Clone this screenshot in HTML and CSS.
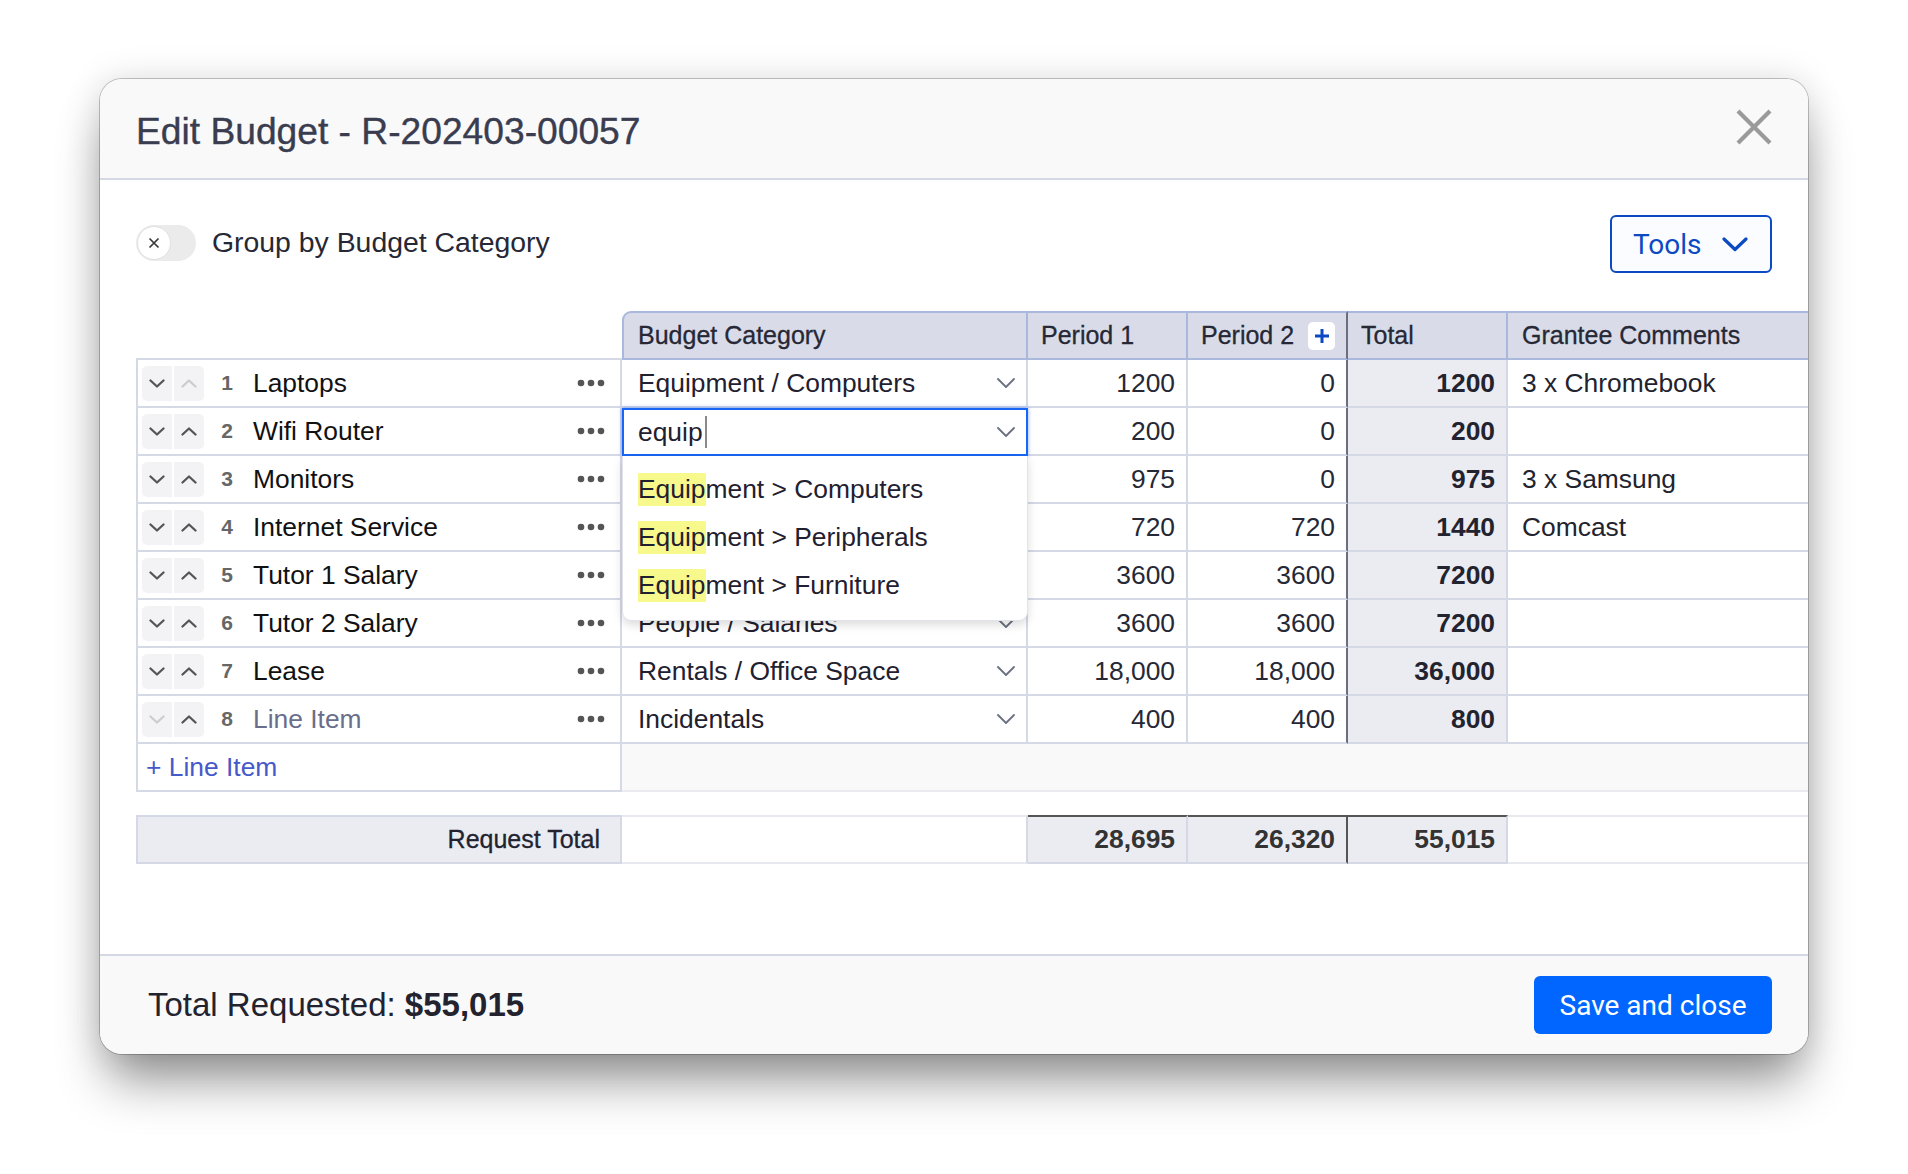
FILE: index.html
```html
<!DOCTYPE html>
<html lang="en">
<head>
<meta charset="utf-8">
<title>Edit Budget</title>
<link rel="stylesheet" href="styles.css">
</head>
<body>
<div class="page">
  <div class="modal">
    <div class="mhead">
      <h1 class="title">Edit Budget - R-202403-00057</h1>
      <svg class="close" width="36" height="36" viewBox="0 0 36 36"><path d="M2 2 L34 34 M34 2 L2 34" stroke="#9a9a9a" stroke-width="4.2" fill="none"/></svg>
    </div>

    <div class="mbody">
      <div class="toolbar">
        <div class="tgroup">
          <div class="toggle"><span class="knob"><svg width="12" height="12" viewBox="0 0 12 12"><path d="M1.5 1.5 L10.5 10.5 M10.5 1.5 L1.5 10.5" stroke="#3a3a3a" stroke-width="1.7" fill="none"/></svg></span></div>
          <span class="tlabel">Group by Budget Category</span>
        </div>
        <div class="tools"><span>Tools</span><svg width="26" height="15" viewBox="0 0 26 15"><path d="M2 2 L13 12.5 L24 2" stroke="#0b4ac2" stroke-width="3.2" fill="none" stroke-linecap="round" stroke-linejoin="round"/></svg></div>
      </div>

      <div class="table">
        <div class="row hrow">
          <div class="hl-empty"></div>
          <div class="hcell hfirst">Budget Category</div>
          <div class="hcell">Period 1</div>
          <div class="hcell hp2"><span>Period 2</span><span class="addp"><svg width="16" height="16" viewBox="0 0 16 16"><path d="M8 1 V15 M1 8 H15" stroke="#0b4ac2" stroke-width="3" fill="none"/></svg></span></div>
          <div class="hcell">Total</div>
          <div class="hcell hlast">Grantee Comments</div>
        </div>

        <div class="row">
          <div class="lc"><span class="mv"><span class="mvb l"><svg class="chev" width="16" height="9" viewBox="0 0 16 9"><path d="M1.5 1.5 L8 7.5 L14.5 1.5"/></svg></span><span class="mvb r dis"><svg class="chev" width="16" height="9" viewBox="0 0 16 9"><path d="M1.5 7.5 L8 1.5 L14.5 7.5"/></svg></span></span><span class="num">1</span><span class="name">Laptops</span><svg class="dots" width="28" height="8" viewBox="0 0 28 8"><circle cx="4" cy="4" r="3.3"/><circle cx="14" cy="4" r="3.3"/><circle cx="24" cy="4" r="3.3"/></svg></div>
          <div class="bc"><span>Equipment / Computers</span><svg class="bchev" width="18" height="10" viewBox="0 0 18 10"><path d="M1 1 L9 9 L17 1"/></svg></div>
          <div class="nc">1200</div>
          <div class="nc p2">0</div>
          <div class="tc">1200</div>
          <div class="gc">3 x Chromebook</div>
        </div>

        <div class="row">
          <div class="lc"><span class="mv"><span class="mvb l"><svg class="chev" width="16" height="9" viewBox="0 0 16 9"><path d="M1.5 1.5 L8 7.5 L14.5 1.5"/></svg></span><span class="mvb r"><svg class="chev" width="16" height="9" viewBox="0 0 16 9"><path d="M1.5 7.5 L8 1.5 L14.5 7.5"/></svg></span></span><span class="num">2</span><span class="name">Wifi Router</span><svg class="dots" width="28" height="8" viewBox="0 0 28 8"><circle cx="4" cy="4" r="3.3"/><circle cx="14" cy="4" r="3.3"/><circle cx="24" cy="4" r="3.3"/></svg></div>
          <div class="bc active"><span class="typed">equip<span class="caret"></span></span><svg class="bchev" width="18" height="10" viewBox="0 0 18 10"><path d="M1 1 L9 9 L17 1"/></svg></div>
          <div class="nc">200</div>
          <div class="nc p2">0</div>
          <div class="tc">200</div>
          <div class="gc"></div>
        </div>

        <div class="row">
          <div class="lc"><span class="mv"><span class="mvb l"><svg class="chev" width="16" height="9" viewBox="0 0 16 9"><path d="M1.5 1.5 L8 7.5 L14.5 1.5"/></svg></span><span class="mvb r"><svg class="chev" width="16" height="9" viewBox="0 0 16 9"><path d="M1.5 7.5 L8 1.5 L14.5 7.5"/></svg></span></span><span class="num">3</span><span class="name">Monitors</span><svg class="dots" width="28" height="8" viewBox="0 0 28 8"><circle cx="4" cy="4" r="3.3"/><circle cx="14" cy="4" r="3.3"/><circle cx="24" cy="4" r="3.3"/></svg></div>
          <div class="bc"><span></span><svg class="bchev" width="18" height="10" viewBox="0 0 18 10"><path d="M1 1 L9 9 L17 1"/></svg></div>
          <div class="nc">975</div>
          <div class="nc p2">0</div>
          <div class="tc">975</div>
          <div class="gc">3 x Samsung</div>
        </div>

        <div class="row">
          <div class="lc"><span class="mv"><span class="mvb l"><svg class="chev" width="16" height="9" viewBox="0 0 16 9"><path d="M1.5 1.5 L8 7.5 L14.5 1.5"/></svg></span><span class="mvb r"><svg class="chev" width="16" height="9" viewBox="0 0 16 9"><path d="M1.5 7.5 L8 1.5 L14.5 7.5"/></svg></span></span><span class="num">4</span><span class="name">Internet Service</span><svg class="dots" width="28" height="8" viewBox="0 0 28 8"><circle cx="4" cy="4" r="3.3"/><circle cx="14" cy="4" r="3.3"/><circle cx="24" cy="4" r="3.3"/></svg></div>
          <div class="bc"><span></span><svg class="bchev" width="18" height="10" viewBox="0 0 18 10"><path d="M1 1 L9 9 L17 1"/></svg></div>
          <div class="nc">720</div>
          <div class="nc p2">720</div>
          <div class="tc">1440</div>
          <div class="gc">Comcast</div>
        </div>

        <div class="row">
          <div class="lc"><span class="mv"><span class="mvb l"><svg class="chev" width="16" height="9" viewBox="0 0 16 9"><path d="M1.5 1.5 L8 7.5 L14.5 1.5"/></svg></span><span class="mvb r"><svg class="chev" width="16" height="9" viewBox="0 0 16 9"><path d="M1.5 7.5 L8 1.5 L14.5 7.5"/></svg></span></span><span class="num">5</span><span class="name">Tutor 1 Salary</span><svg class="dots" width="28" height="8" viewBox="0 0 28 8"><circle cx="4" cy="4" r="3.3"/><circle cx="14" cy="4" r="3.3"/><circle cx="24" cy="4" r="3.3"/></svg></div>
          <div class="bc"><span></span><svg class="bchev" width="18" height="10" viewBox="0 0 18 10"><path d="M1 1 L9 9 L17 1"/></svg></div>
          <div class="nc">3600</div>
          <div class="nc p2">3600</div>
          <div class="tc">7200</div>
          <div class="gc"></div>
        </div>

        <div class="row">
          <div class="lc"><span class="mv"><span class="mvb l"><svg class="chev" width="16" height="9" viewBox="0 0 16 9"><path d="M1.5 1.5 L8 7.5 L14.5 1.5"/></svg></span><span class="mvb r"><svg class="chev" width="16" height="9" viewBox="0 0 16 9"><path d="M1.5 7.5 L8 1.5 L14.5 7.5"/></svg></span></span><span class="num">6</span><span class="name">Tutor 2 Salary</span><svg class="dots" width="28" height="8" viewBox="0 0 28 8"><circle cx="4" cy="4" r="3.3"/><circle cx="14" cy="4" r="3.3"/><circle cx="24" cy="4" r="3.3"/></svg></div>
          <div class="bc"><span>People / Salaries</span><svg class="bchev" width="18" height="10" viewBox="0 0 18 10"><path d="M1 1 L9 9 L17 1"/></svg></div>
          <div class="nc">3600</div>
          <div class="nc p2">3600</div>
          <div class="tc">7200</div>
          <div class="gc"></div>
        </div>

        <div class="row">
          <div class="lc"><span class="mv"><span class="mvb l"><svg class="chev" width="16" height="9" viewBox="0 0 16 9"><path d="M1.5 1.5 L8 7.5 L14.5 1.5"/></svg></span><span class="mvb r"><svg class="chev" width="16" height="9" viewBox="0 0 16 9"><path d="M1.5 7.5 L8 1.5 L14.5 7.5"/></svg></span></span><span class="num">7</span><span class="name">Lease</span><svg class="dots" width="28" height="8" viewBox="0 0 28 8"><circle cx="4" cy="4" r="3.3"/><circle cx="14" cy="4" r="3.3"/><circle cx="24" cy="4" r="3.3"/></svg></div>
          <div class="bc"><span>Rentals / Office Space</span><svg class="bchev" width="18" height="10" viewBox="0 0 18 10"><path d="M1 1 L9 9 L17 1"/></svg></div>
          <div class="nc">18,000</div>
          <div class="nc p2">18,000</div>
          <div class="tc">36,000</div>
          <div class="gc"></div>
        </div>

        <div class="row">
          <div class="lc"><span class="mv"><span class="mvb l dis"><svg class="chev" width="16" height="9" viewBox="0 0 16 9"><path d="M1.5 1.5 L8 7.5 L14.5 1.5"/></svg></span><span class="mvb r"><svg class="chev" width="16" height="9" viewBox="0 0 16 9"><path d="M1.5 7.5 L8 1.5 L14.5 7.5"/></svg></span></span><span class="num">8</span><span class="name placeholder">Line Item</span><svg class="dots" width="28" height="8" viewBox="0 0 28 8"><circle cx="4" cy="4" r="3.3"/><circle cx="14" cy="4" r="3.3"/><circle cx="24" cy="4" r="3.3"/></svg></div>
          <div class="bc"><span>Incidentals</span><svg class="bchev" width="18" height="10" viewBox="0 0 18 10"><path d="M1 1 L9 9 L17 1"/></svg></div>
          <div class="nc">400</div>
          <div class="nc p2">400</div>
          <div class="tc">800</div>
          <div class="gc"></div>
        </div>

        <div class="row addrow">
          <div class="lc addcell">+ Line Item</div>
          <div class="addfill"></div>
        </div>

        <div class="row totrow">
          <div class="trl">Request Total</div>
          <div class="trb"></div>
          <div class="trn">28,695</div>
          <div class="trn p2">26,320</div>
          <div class="trn">55,015</div>
          <div class="trg"></div>
        </div>

        <div class="dropdown">
          <div class="ditem"><mark class="hl">Equip</mark>ment &gt; Computers</div>
          <div class="ditem"><mark class="hl">Equip</mark>ment &gt; Peripherals</div>
          <div class="ditem"><mark class="hl">Equip</mark>ment &gt; Furniture</div>
        </div>
      </div>
    </div>

    <div class="mfoot">
      <div class="ftotal">Total Requested: <b>$55,015</b></div>
      <div class="save">Save and close</div>
    </div>
  </div>
</div>
</body>
</html>
```

FILE: styles.css
```css
html, body {
  margin: 0;
  padding: 0;
  background: #ffffff;
  font-family: "Liberation Sans", Arial, Helvetica, sans-serif;
}

.page {
  padding: 79px 0 120px 100px;
}

.modal {
  width: 1708px;
  height: 975px;
  border-radius: 22px;
  overflow: hidden;
  background: #ffffff;
  display: flex;
  flex-direction: column;
  box-shadow: 0 0 0 1px rgba(0, 0, 0, 0.22), 0 34px 50px -8px rgba(0, 0, 0, 0.42), 0 0 36px rgba(0, 0, 0, 0.13);
}

/* header */
.mhead {
  height: 101px;
  box-sizing: border-box;
  flex: none;
  background: #f9f9fa;
  border-bottom: 2px solid #d5d8e5;
  display: flex;
  align-items: center;
  justify-content: space-between;
  padding: 6px 36px 0 36px;
}

.title {
  margin: 0;
  font-size: 37.2px;
  font-weight: normal;
  color: #3a3d4f;
  -webkit-text-stroke: 0.4px #3a3d4f;
}

.close {
  display: block;
  margin-top: -10px;
}

/* body */
.mbody {
  flex: 1;
  padding: 35px 0 0 36px;
}

.toolbar {
  height: 58px;
  display: flex;
  align-items: center;
  justify-content: space-between;
  padding-right: 36px;
}

.tgroup {
  display: flex;
  align-items: center;
  margin-top: -3px;
}

.toggle {
  width: 60px;
  height: 36px;
  box-sizing: border-box;
  border-radius: 18px;
  background: #ebebeb;
  display: flex;
  align-items: center;
  padding: 1px;
}

.knob {
  width: 34px;
  height: 34px;
  box-sizing: border-box;
  border-radius: 50%;
  background: #ffffff;
  border: 1px solid #e0e0e0;
  display: flex;
  align-items: center;
  justify-content: center;
}

.tlabel {
  margin-left: 16px;
  font-size: 28.4px;
  color: #262836;
}

.tools {
  width: 162px;
  height: 58px;
  box-sizing: border-box;
  border: 2px solid #0b4ac2;
  border-radius: 6px;
  background: #fbfcff;
  display: flex;
  align-items: center;
  justify-content: space-between;
  padding: 0 22px 0 21px;
  font-family: Roboto, "Liberation Sans", sans-serif;
  font-size: 28px;
  color: #0b4ac2;
}

/* table */
.table {
  position: relative;
  margin-top: 38px;
}

.row {
  display: grid;
  grid-template-columns: 486px 406px 160px 160px 160px 300px;
  height: 48px;
}

.row.hrow {
  height: 49px;
}

.row > div {
  box-sizing: border-box;
  display: flex;
  align-items: center;
  min-width: 0;
  white-space: nowrap;
  overflow: hidden;
}

.hl-empty {
  border-bottom: 2px solid #d5d8e5;
}

.hcell {
  background: #d9dce8;
  border-top: 2px solid #a9b8dc;
  border-bottom: 2px solid #a9b8dc;
  border-right: 2px solid #a9b8dc;
  font-size: 25px;
  color: #262836;
  -webkit-text-stroke: 0.3px #262836;
  padding-left: 13px;
}

.hcell.hfirst {
  border-left: 2px solid #a9b8dc;
  border-top-left-radius: 9px;
  padding-left: 14px;
}

.hcell.hp2 {
  border-right-color: #6b6e80;
  justify-content: space-between;
  padding-right: 11px;
}

.hcell.hlast {
  border-right: none;
  padding-left: 14px;
}

.addp {
  width: 27px;
  height: 28px;
  border-radius: 5px;
  background: #ffffff;
  display: flex;
  align-items: center;
  justify-content: center;
  -webkit-text-stroke: 0;
}

/* body cells */
.lc {
  border-left: 2px solid #d5d8e5;
  border-right: 2px solid #d5d8e5;
  border-bottom: 2px solid #d5d8e5;
  padding: 0 15px 0 4px;
}

.mv {
  display: flex;
  gap: 2px;
  flex: none;
}

.mvb {
  width: 30px;
  height: 35px;
  background: #f3f3f5;
  display: flex;
  align-items: center;
  justify-content: center;
}

.mvb.l {
  border-radius: 5px 0 0 5px;
}

.mvb.r {
  border-radius: 0 5px 5px 0;
}

.chev path {
  fill: none;
  stroke: #555555;
  stroke-width: 2.3;
  stroke-linecap: round;
  stroke-linejoin: round;
}

.mvb.dis .chev path {
  stroke: #cccccc;
}

.num {
  width: 46px;
  flex: none;
  text-align: center;
  font-size: 21px;
  font-weight: bold;
  color: #666666;
}

.name {
  flex: 1;
  margin-left: 3px;
  font-size: 26.4px;
  color: #111111;
}

.name.placeholder {
  color: #6a6e8a;
}

.dots {
  flex: none;
}

.dots circle {
  fill: #555555;
}

.bc {
  position: relative;
  border-bottom: 2px solid #d5d8e5;
  border-right: 2px solid #d5d8e5;
  padding: 0 11px 0 16px;
  justify-content: space-between;
  font-size: 26.4px;
  color: #1f2030;
}

.bchev path {
  fill: none;
  stroke: #6b6f80;
  stroke-width: 1.8;
  stroke-linecap: round;
  stroke-linejoin: round;
}

.bc.active {
  border: 2px solid #1766f5;
  box-shadow: 0 0 4px rgba(23, 102, 245, 0.55);
  padding-left: 14px;
  z-index: 2;
  overflow: visible;
}

.typed {
  display: flex;
  align-items: center;
}

.caret {
  display: inline-block;
  width: 2px;
  height: 32px;
  margin-left: 2px;
  background: #8a8a8a;
}

.nc {
  border-bottom: 2px solid #d5d8e5;
  border-right: 2px solid #d5d8e5;
  justify-content: flex-end;
  padding-right: 11px;
  font-size: 26.4px;
  color: #262836;
}

.nc.p2 {
  border-right-color: #6b6e80;
}

.tc {
  background: #ebebf2;
  border-bottom: 2px solid #d5d8e5;
  border-right: 2px solid #d5d8e5;
  justify-content: flex-end;
  padding-right: 11px;
  font-size: 26.4px;
  font-weight: bold;
  color: #22232e;
}

.gc {
  border-bottom: 2px solid #d5d8e5;
  padding-left: 14px;
  font-size: 26.4px;
  color: #22232e;
}

/* add row */
.addcell {
  padding-left: 8px;
  font-size: 26.4px;
  color: #4659c9;
}

.addfill {
  grid-column: 2 / 7;
  background: #f9f9f9;
  border-bottom: 2px solid #ebebef;
}

/* total row */
.totrow {
  height: 49px;
  margin-top: 23px;
}

.trl {
  background: #ebecf2;
  border: 2px solid #d5d8e5;
  justify-content: flex-end;
  padding-right: 20px;
  font-size: 25px;
  color: #22232e;
  -webkit-text-stroke: 0.3px #22232e;
}

.trb {
  border-top: 2px solid #e8e9ee;
  border-bottom: 2px solid #e8e9ee;
  border-right: 2px solid #d5d8e5;
}

.trn {
  background: #ebecf2;
  border-top: 2px solid #555555;
  border-bottom: 2px solid #d5d8e5;
  border-right: 2px solid #d5d8e5;
  justify-content: flex-end;
  padding-right: 11px;
  font-size: 26.4px;
  font-weight: bold;
  color: #333333;
}

.trn.p2 {
  border-right-color: #555555;
}

.trg {
  border-top: 2px solid #e8e9ee;
  border-bottom: 2px solid #e8e9ee;
}

/* dropdown */
.dropdown {
  position: absolute;
  left: 486px;
  top: 145px;
  width: 406px;
  box-sizing: border-box;
  padding: 9px 0 11px 0;
  background: #ffffff;
  border: 1px solid #e2e3ea;
  border-top: none;
  border-radius: 0 0 9px 9px;
  box-shadow: 0 4px 10px rgba(0, 0, 0, 0.14);
  z-index: 3;
}

.ditem {
  height: 48px;
  display: flex;
  align-items: center;
  padding-left: 15px;
  font-size: 26.4px;
  color: #1f2030;
  white-space: nowrap;
}

.hl {
  background: #f8f98c;
  color: inherit;
  padding: 1px 0;
}

/* footer */
.mfoot {
  height: 100px;
  flex: none;
  box-sizing: border-box;
  border-top: 2px solid #d5d8e5;
  background: #f9f9fa;
  display: flex;
  align-items: center;
  justify-content: space-between;
  padding: 0 36px 0 48px;
}

.ftotal {
  font-size: 33px;
  color: #22232e;
}

.save {
  width: 238px;
  height: 58px;
  border-radius: 6px;
  background: #0066ff;
  color: #ffffff;
  display: flex;
  align-items: center;
  justify-content: center;
  font-family: Roboto, "Liberation Sans", sans-serif;
  font-size: 28px;
}
```
